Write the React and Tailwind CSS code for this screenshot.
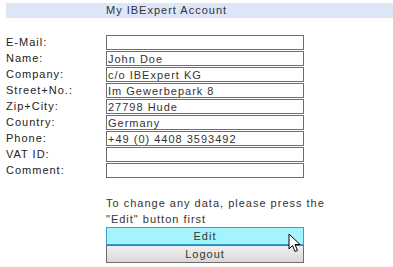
import React from "react";

const fields = [
  { label: "E-Mail:", value: "" },
  { label: "Name:", value: "John Doe" },
  { label: "Company:", value: "c/o IBExpert KG" },
  { label: "Street+No.:", value: "Im Gewerbepark 8" },
  { label: "Zip+City:", value: "27798 Hude" },
  { label: "Country:", value: "Germany" },
  { label: "Phone:", value: "+49 (0) 4408 3593492" },
  { label: "VAT ID:", value: "" },
  { label: "Comment:", value: "" },
];

function Cursor() {
  return (
    <svg
      className="absolute left-[288px] top-[233px]"
      width="14"
      height="21"
      viewBox="0 0 14 21"
    >
      <path
        d="M1 1 L1 16 L4.5 12.5 L7 18.5 L9.5 17.5 L7 11.5 L12 11.5 Z"
        fill="#fff"
        stroke="#000"
        strokeWidth="1"
        strokeLinejoin="miter"
      />
    </svg>
  );
}

export default function App() {
  return (
    <div className="relative w-[393px] h-[267px] bg-white font-['Liberation_Sans',Arial,sans-serif] text-[11px] tracking-[1px] text-[#333]">
      <div className="pt-[3px] pl-[6px]">
        <div className="h-[15px] bg-[#dde6f6] pl-[100px] leading-[15px] text-[#333]">
          My IBExpert Account
        </div>
      </div>

      <div className="mt-[17px] pl-[6px] flex flex-col gap-[1px]">
        {fields.map((f) => (
          <div key={f.label} className="flex items-center h-[15px]">
            <div className="w-[100px] leading-[15px] text-[#222]">{f.label}</div>
            <div className="w-[198px] h-[15px] border border-[#6e6e6e] bg-white pl-[1px] leading-[14px] text-[#333] overflow-hidden whitespace-nowrap">
              {f.value}
            </div>
          </div>
        ))}
      </div>

      <div className="mt-[17px] pl-[106px] w-[340px] leading-[16px] text-[#333]">
        <div>To change any data, please press the</div>
        <div>"Edit" button first</div>
      </div>

      <div className="pl-[106px] flex flex-col">
        <button className="w-[198px] h-[18px] border border-[#3a9fd0] bg-[#a3f4fd] text-center leading-[16px] text-[#333]">
          Edit
        </button>
        <button className="w-[198px] h-[18px] border border-[#6e6e6e] bg-gradient-to-b from-[#f0f0f0] to-[#d8d8d8] text-center leading-[16px] text-[#333]">
          Logout
        </button>
      </div>

      <Cursor />
    </div>
  );
}
